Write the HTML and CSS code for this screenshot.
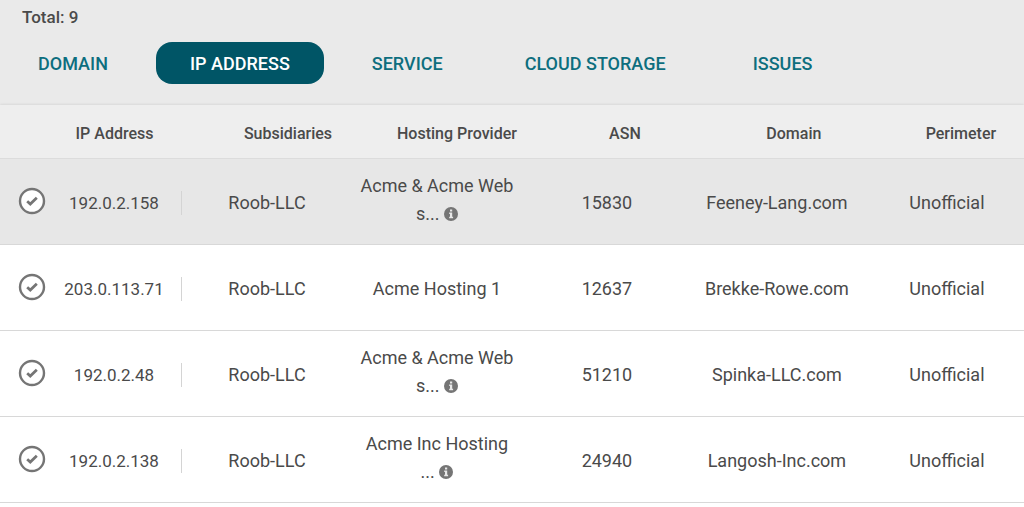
FILE: index.html
```html
<!DOCTYPE html>
<html lang="en">
<head>
    <meta charset="utf-8">
    <meta name="viewport" content="width=device-width, initial-scale=1">
    <title>Assets</title>
    <link rel="stylesheet" href="styles.css">
</head>
<body>
<svg class="sprite" aria-hidden="true">
    <symbol id="check" viewBox="0 0 28 28">
        <circle cx="14" cy="14" r="12" fill="#fff" stroke="#757575" stroke-width="2.4"/>
        <path d="M9.2 14.2l3.1 2.8 6.5-6.2" fill="none" stroke="#757575" stroke-width="2.8"/>
    </symbol>
    <symbol id="info" viewBox="0 0 14 14">
        <circle cx="7" cy="7" r="7" fill="#757575"/>
        <path d="M6 2.600h2.200v2H6zM5.200 5.600h3v4.200h.9v1.500H5.200V9.800H6V7.100h-.8z" fill="#e8e8e8"/>
    </symbol>
</svg>

<header class="top">
    <p class="total">Total: 9</p>
    <nav class="tabs">
        <button type="button" class="tab">DOMAIN</button>
        <button type="button" class="tab active">IP ADDRESS</button>
        <button type="button" class="tab">SERVICE</button>
        <button type="button" class="tab">CLOUD STORAGE</button>
        <button type="button" class="tab">ISSUES</button>
    </nav>
</header>

<table class="assets">
    <colgroup>
        <col class="col-check">
        <col class="col-ip">
        <col class="col-data" span="4">
        <col>
    </colgroup>
    <thead>
        <tr>
            <th></th>
            <th>IP Address</th>
            <th class="subsidiaries">Subsidiaries</th>
            <th class="hosting">Hosting Provider</th>
            <th class="asn">ASN</th>
            <th class="domain">Domain</th>
            <th class="perimeter">Perimeter</th>
        </tr>
    </thead>
    <tbody>
        <tr class="selected">
            <td class="check"><button type="button" aria-label="Select 192.0.2.158"><svg><use href="#check"/></svg></button></td>
            <td class="ip"><div>192.0.2.158</div></td>
            <td>Roob-LLC</td>
            <td class="truncated">Acme &amp; Acme Web s... <svg class="info"><use href="#info"/></svg></td>
            <td>15830</td>
            <td>Feeney-Lang.com</td>
            <td class="last">Unofficial</td>
        </tr>
        <tr>
            <td class="check"><button type="button" aria-label="Select 203.0.113.71"><svg><use href="#check"/></svg></button></td>
            <td class="ip"><div>203.0.113.71</div></td>
            <td>Roob-LLC</td>
            <td>Acme Hosting 1</td>
            <td>12637</td>
            <td>Brekke-Rowe.com</td>
            <td class="last">Unofficial</td>
        </tr>
        <tr>
            <td class="check"><button type="button" aria-label="Select 192.0.2.48"><svg><use href="#check"/></svg></button></td>
            <td class="ip"><div>192.0.2.48</div></td>
            <td>Roob-LLC</td>
            <td class="truncated">Acme &amp; Acme Web s... <svg class="info"><use href="#info"/></svg></td>
            <td>51210</td>
            <td>Spinka-LLC.com</td>
            <td class="last">Unofficial</td>
        </tr>
        <tr>
            <td class="check"><button type="button" aria-label="Select 192.0.2.138"><svg><use href="#check"/></svg></button></td>
            <td class="ip"><div>192.0.2.138</div></td>
            <td>Roob-LLC</td>
            <td class="truncated">Acme Inc Hosting<br>... <svg class="info"><use href="#info"/></svg></td>
            <td>24940</td>
            <td>Langosh-Inc.com</td>
            <td class="last">Unofficial</td>
        </tr>
    </tbody>
</table>
</body>
</html>
```
FILE: styles.css
```css
* {
    box-sizing: border-box;
}
body {
    margin: 0;
    background-color: #fff;
    color: #4a4a4a;
    font-family: Roboto, "Liberation Sans", sans-serif;
    font-size: 18px;
}
button {
    border: none;
    background: none;
    padding: 0;
    font-family: inherit;
    cursor: pointer;
}
.sprite {
    display: none;
}
.top {
    background-color: #eaeaea;
    padding: 5px 4px 21px;
}
.total {
    margin: 0 0 13px;
    padding-left: 18px;
    font-size: 17px;
    font-weight: 500;
    line-height: 24px;
}
.tabs {
    display: flex;
    gap: 14px;
}
.tab {
    min-width: 138px;
    height: 42px;
    padding: 1px 34px 0;
    border-radius: 16px;
    color: #0d6e7e;
    font-size: 18px;
    font-weight: 500;
    white-space: nowrap;
}
.tab.active {
    background-color: #005566;
    color: #fff;
}
.assets {
    width: 100%;
    table-layout: fixed;
    border-collapse: separate;
    border-spacing: 0;
    text-align: center;
    box-shadow: 0 0 3px rgba(0, 0, 0, 0.14);
}
.col-check {
    width: 47px;
}
.col-ip {
    width: 135px;
}
.col-data {
    width: 16.6%;
}
th {
    height: 54px;
    padding: 4px 0 0;
    background-color: #eee;
    border-bottom: 1px solid #dcdcdc;
    font-size: 16px;
    font-weight: 500;
    white-space: nowrap;
}
th.subsidiaries {
    padding-left: 42px;
}
th.hosting {
    padding-left: 40px;
}
th.asn {
    padding-left: 36px;
}
th.domain {
    padding-left: 34px;
}
th.perimeter {
    padding-left: 36px;
}
td {
    height: 86px;
    padding: 2px 0 0;
    border-bottom: 1px solid #d8d8d8;
    line-height: 28px;
}
.selected td {
    background-color: #e7e7e7;
}
td.check {
    padding: 0 0 1px 18px;
}
.check button,
.check svg {
    display: block;
    width: 28px;
    height: 28px;
}
.ip div {
    border-right: 1px solid #d4d4d4;
    height: 24px;
    font-size: 17px;
    line-height: 24px;
}
td.truncated {
    padding: 0 4px 3px;
}
.info {
    width: 14px;
    height: 14px;
    vertical-align: -1px;
}
.last {
    padding-left: 8px;
}
```
